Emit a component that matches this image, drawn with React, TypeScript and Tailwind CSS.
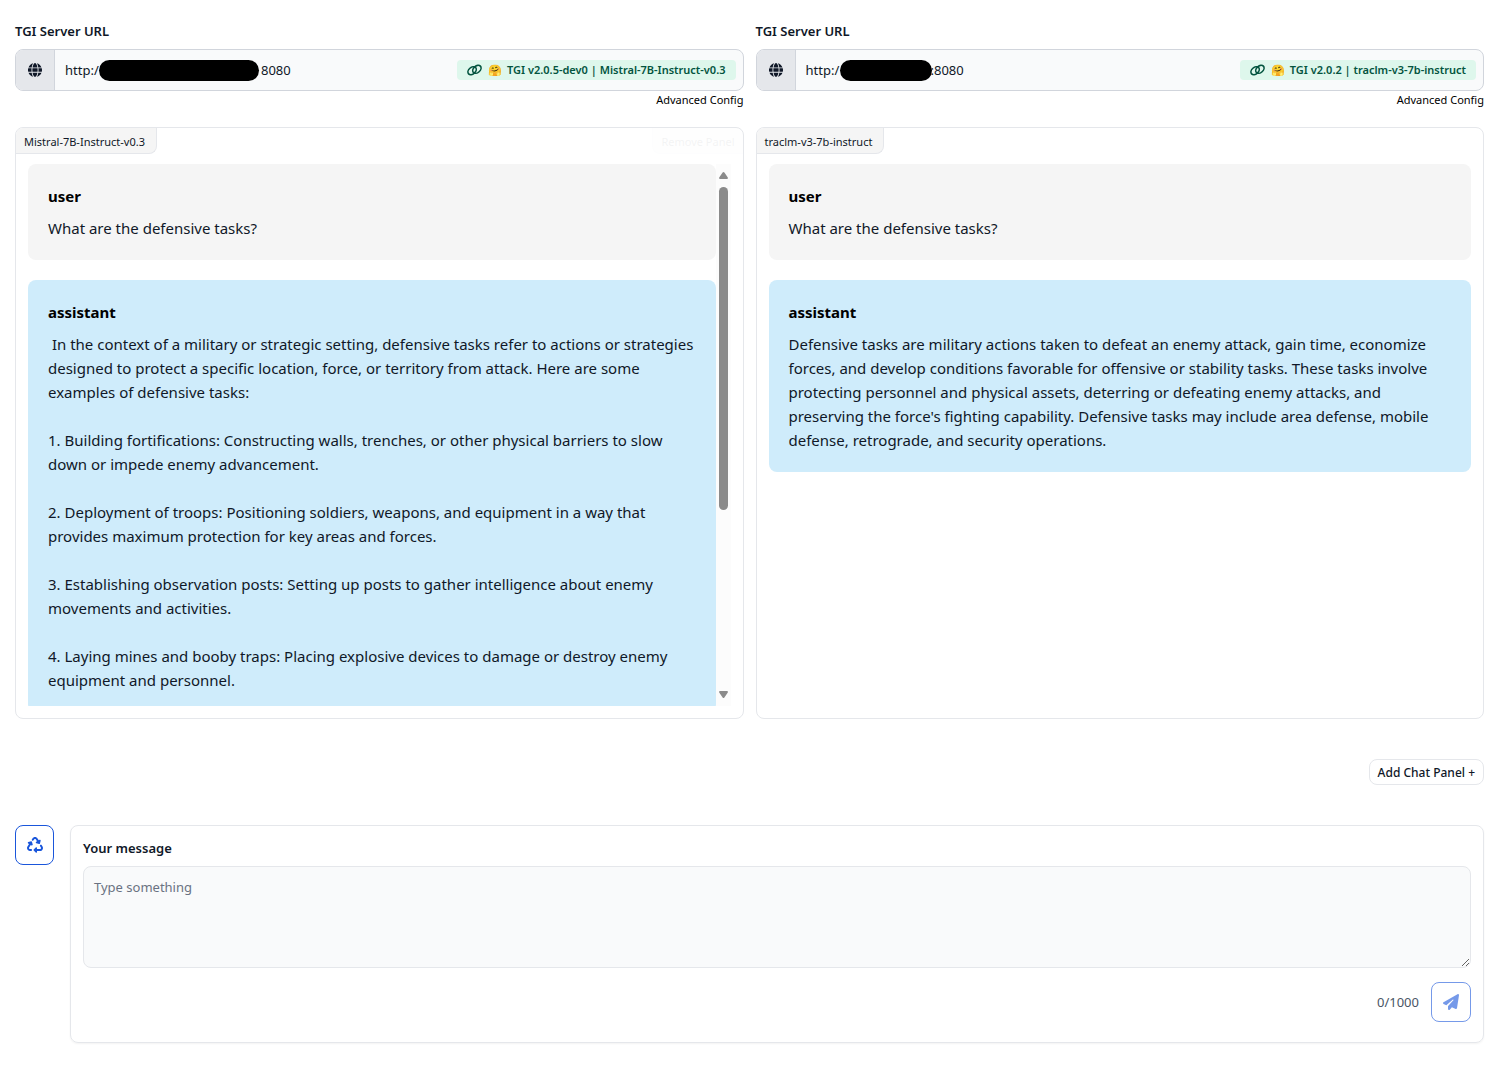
import { useState } from 'react'
import { FaGlobe, FaPaperPlane, FaRecycle } from 'react-icons/fa6'

type Message = { role: string; content: string }

type Panel = {
  id: string
  url: string
  maskWidth: string
  version: string
  model: string
  scrollable: boolean
  messages: Message[]
}

const MAX_LENGTH = 1000

// the host part of a url is blank, it sits under the mask
const blank = (count: number) => '\u00a0'.repeat(count)

const panels: Panel[] = [
  {
    id: 'mistral',
    url: `http:/${blank(48)}8080`,
    maskWidth: 'w-40',
    version: 'v2.0.5-dev0',
    model: 'Mistral-7B-Instruct-v0.3',
    scrollable: true,
    messages: [
      { role: 'user', content: 'What are the defensive tasks?' },
      {
        role: 'assistant',
        content: ` In the context of a military or strategic setting, defensive tasks refer to actions or strategies designed to protect a specific location, force, or territory from attack. Here are some examples of defensive tasks:

1. Building fortifications: Constructing walls, trenches, or other physical barriers to slow down or impede enemy advancement.

2. Deployment of troops: Positioning soldiers, weapons, and equipment in a way that provides maximum protection for key areas and forces.

3. Establishing observation posts: Setting up posts to gather intelligence about enemy movements and activities.

4. Laying mines and booby traps: Placing explosive devices to damage or destroy enemy equipment and personnel.`,
      },
    ],
  },
  {
    id: 'traclm',
    url: `http:/${blank(27)}:8080`,
    maskWidth: 'w-23',
    version: 'v2.0.2',
    model: 'traclm-v3-7b-instruct',
    scrollable: false,
    messages: [
      { role: 'user', content: 'What are the defensive tasks?' },
      {
        role: 'assistant',
        content:
          "Defensive tasks are military actions taken to defeat an enemy attack, gain time, economize forces, and develop conditions favorable for offensive or stability tasks. These tasks involve protecting personnel and physical assets, deterring or defeating enemy attacks, and preserving the force's fighting capability. Defensive tasks may include area defense, mobile defense, retrograde, and security operations.",
      },
    ],
  },
]

function ChainIcon() {
  return (
    <svg viewBox="0 0 15 12" className="mr-[6px] h-3 w-[15px]" fill="none" stroke="currentColor" strokeWidth="1.6">
      <ellipse cx="5.1" cy="6.7" rx="4.7" ry="3.3" transform="rotate(-42 5.1 6.7)" />
      <ellipse cx="9.9" cy="5.3" rx="4.7" ry="3.3" transform="rotate(-42 9.9 5.3)" />
    </svg>
  )
}

function ServerConfig({ panel }: { panel: Panel }) {
  const [url, setUrl] = useState(panel.url)

  return (
    <div>
      <label
        htmlFor={`url-${panel.id}`}
        className="mb-2 block text-[13px] leading-5 font-semibold text-gray-900"
      >
        TGI Server URL
      </label>
      <div className="flex h-[42px] overflow-hidden rounded-lg border border-gray-300 bg-gray-50">
        <span className="flex w-[39px] shrink-0 items-center justify-center border-r border-gray-300 bg-gray-200 text-gray-900">
          <FaGlobe className="size-[14px]" />
        </span>
        <div className="relative flex min-w-0 flex-1 items-center pr-[7px]">
          <input
            id={`url-${panel.id}`}
            type="text"
            value={url}
            onChange={(e) => setUrl(e.target.value)}
            className="h-full min-w-0 flex-1 bg-transparent pl-[10px] text-[13px] text-gray-900 outline-none"
          />
          <span className={`absolute left-11 h-[21px] rounded-full bg-black ${panel.maskWidth}`} />
          <span className="flex h-5 shrink-0 items-center rounded bg-[#def7ec] px-[10px] text-[11px] font-semibold text-[#03543f]">
            <ChainIcon />
            <span className="mr-[5px]">🤗</span>
            TGI {panel.version} | {panel.model}
          </span>
        </div>
      </div>
      <div className="flex justify-end">
        <button type="button" className="text-[11px] leading-[18px] text-black">
          Advanced Config
        </button>
      </div>
    </div>
  )
}

function Scrollbar() {
  return (
    <div className="flex w-[15px] shrink-0 flex-col items-center bg-[#fcfcfc] py-2 text-[#8b8b8b]">
      <svg viewBox="0 0 9 7" className="h-[7px] w-[9px]" fill="currentColor">
        <path d="M4.5 0 Q5 0 5.4 .6 L8.8 5.6 Q9.2 7 8 7 H1 Q-.2 7 .2 5.6 L3.6 .6 Q4 0 4.5 0Z" />
      </svg>
      <div className="mt-2 min-h-0 flex-1 self-stretch px-[3px]">
        <div className="h-[64%] rounded-full bg-[#8b8b8b]" />
      </div>
      <svg viewBox="0 0 9 7" className="h-[7px] w-[9px]" fill="currentColor">
        <path d="M4.5 7 Q5 7 5.4 6.4 L8.8 1.4 Q9.2 0 8 0 H1 Q-.2 0 .2 1.4 L3.6 6.4 Q4 7 4.5 7Z" />
      </svg>
    </div>
  )
}

function ChatPanel({ panel }: { panel: Panel }) {
  return (
    <section className="flex h-[592px] flex-col overflow-hidden rounded-lg border border-gray-200">
      <div className="flex items-start justify-between">
        <h3 className="rounded-br-lg border-r border-b border-gray-200 bg-[#f5f5f5] pt-[5px] pr-[11px] pb-[3px] pl-2 text-[11px] leading-[17px] text-gray-900">
          {panel.model}
        </h3>
        {panel.scrollable && (
          <button
            type="button"
            className="rounded-bl-lg border-b border-l border-gray-300 bg-gray-200 px-2 pt-[5px] pb-[3px] text-[11px] leading-[17px] text-gray-900 opacity-5 hover:opacity-100"
          >
            Remove Panel
          </button>
        )}
      </div>
      <div className="mx-3 mt-[10px] mb-3 flex min-h-0 flex-1">
        <div className="min-w-0 flex-1 overflow-y-auto [scrollbar-width:none]">
          {panel.messages.map((message) => (
            <div
              key={message.role}
              className={`mb-5 rounded-lg p-5 text-[15px] leading-6 ${
                message.role === 'user' ? 'bg-[#f5f5f5]' : 'bg-[#cfecfb]'
              }`}
            >
              <p className="mb-2 font-bold text-black">{message.role}</p>
              <p className="whitespace-pre-wrap text-gray-900">{message.content}</p>
            </div>
          ))}
        </div>
        {panel.scrollable && <Scrollbar />}
      </div>
    </section>
  )
}

function MessageForm() {
  const [text, setText] = useState('')

  return (
    <form
      onSubmit={(e) => e.preventDefault()}
      className="flex-1 rounded-lg border border-gray-200 px-3 pt-3 pb-5 shadow-xs"
    >
      <label htmlFor="message" className="mb-2 block text-[13px] leading-5 font-semibold text-gray-900">
        Your message
      </label>
      <textarea
        id="message"
        rows={4}
        maxLength={MAX_LENGTH}
        value={text}
        onChange={(e) => setText(e.target.value)}
        placeholder="Type something"
        className="block w-full rounded-lg border border-gray-200 bg-gray-50 p-[10px] text-[13px] leading-5 text-gray-900 placeholder:text-gray-500"
      />
      <div className="mt-[14px] flex items-center justify-end gap-3">
        <span className="text-[13px] leading-5 text-gray-600">
          {text.length}/{MAX_LENGTH}
        </span>
        <button
          type="submit"
          disabled={text.length === 0}
          aria-label="Send message"
          className="flex size-10 items-center justify-center rounded-lg border border-[#1a56db] text-[#1a56db] disabled:opacity-60"
        >
          <FaPaperPlane className="size-4" />
        </button>
      </div>
    </form>
  )
}

export default function App() {
  return (
    <main className="pt-[21px] pr-[25px] pb-6 pl-[15px] font-['Noto_Sans',sans-serif]">
      <div className="grid grid-cols-2 gap-x-3 gap-y-[18px]">
        {panels.map((panel) => (
          <ServerConfig key={panel.id} panel={panel} />
        ))}
        {panels.map((panel) => (
          <ChatPanel key={panel.id} panel={panel} />
        ))}
      </div>
      <div className="my-10 flex justify-end">
        <button
          type="button"
          className="rounded-lg border border-gray-200 px-2 pt-[5px] pb-[3px] text-xs font-medium text-gray-900"
        >
          Add Chat Panel +
        </button>
      </div>
      <div className="flex items-start gap-4">
        <button
          type="button"
          aria-label="Reset chat"
          className="flex h-10 w-[39px] items-center justify-center rounded-lg border border-[#1a56db] text-[#1a56db]"
        >
          <FaRecycle className="size-4" />
        </button>
        <MessageForm />
      </div>
    </main>
  )
}
